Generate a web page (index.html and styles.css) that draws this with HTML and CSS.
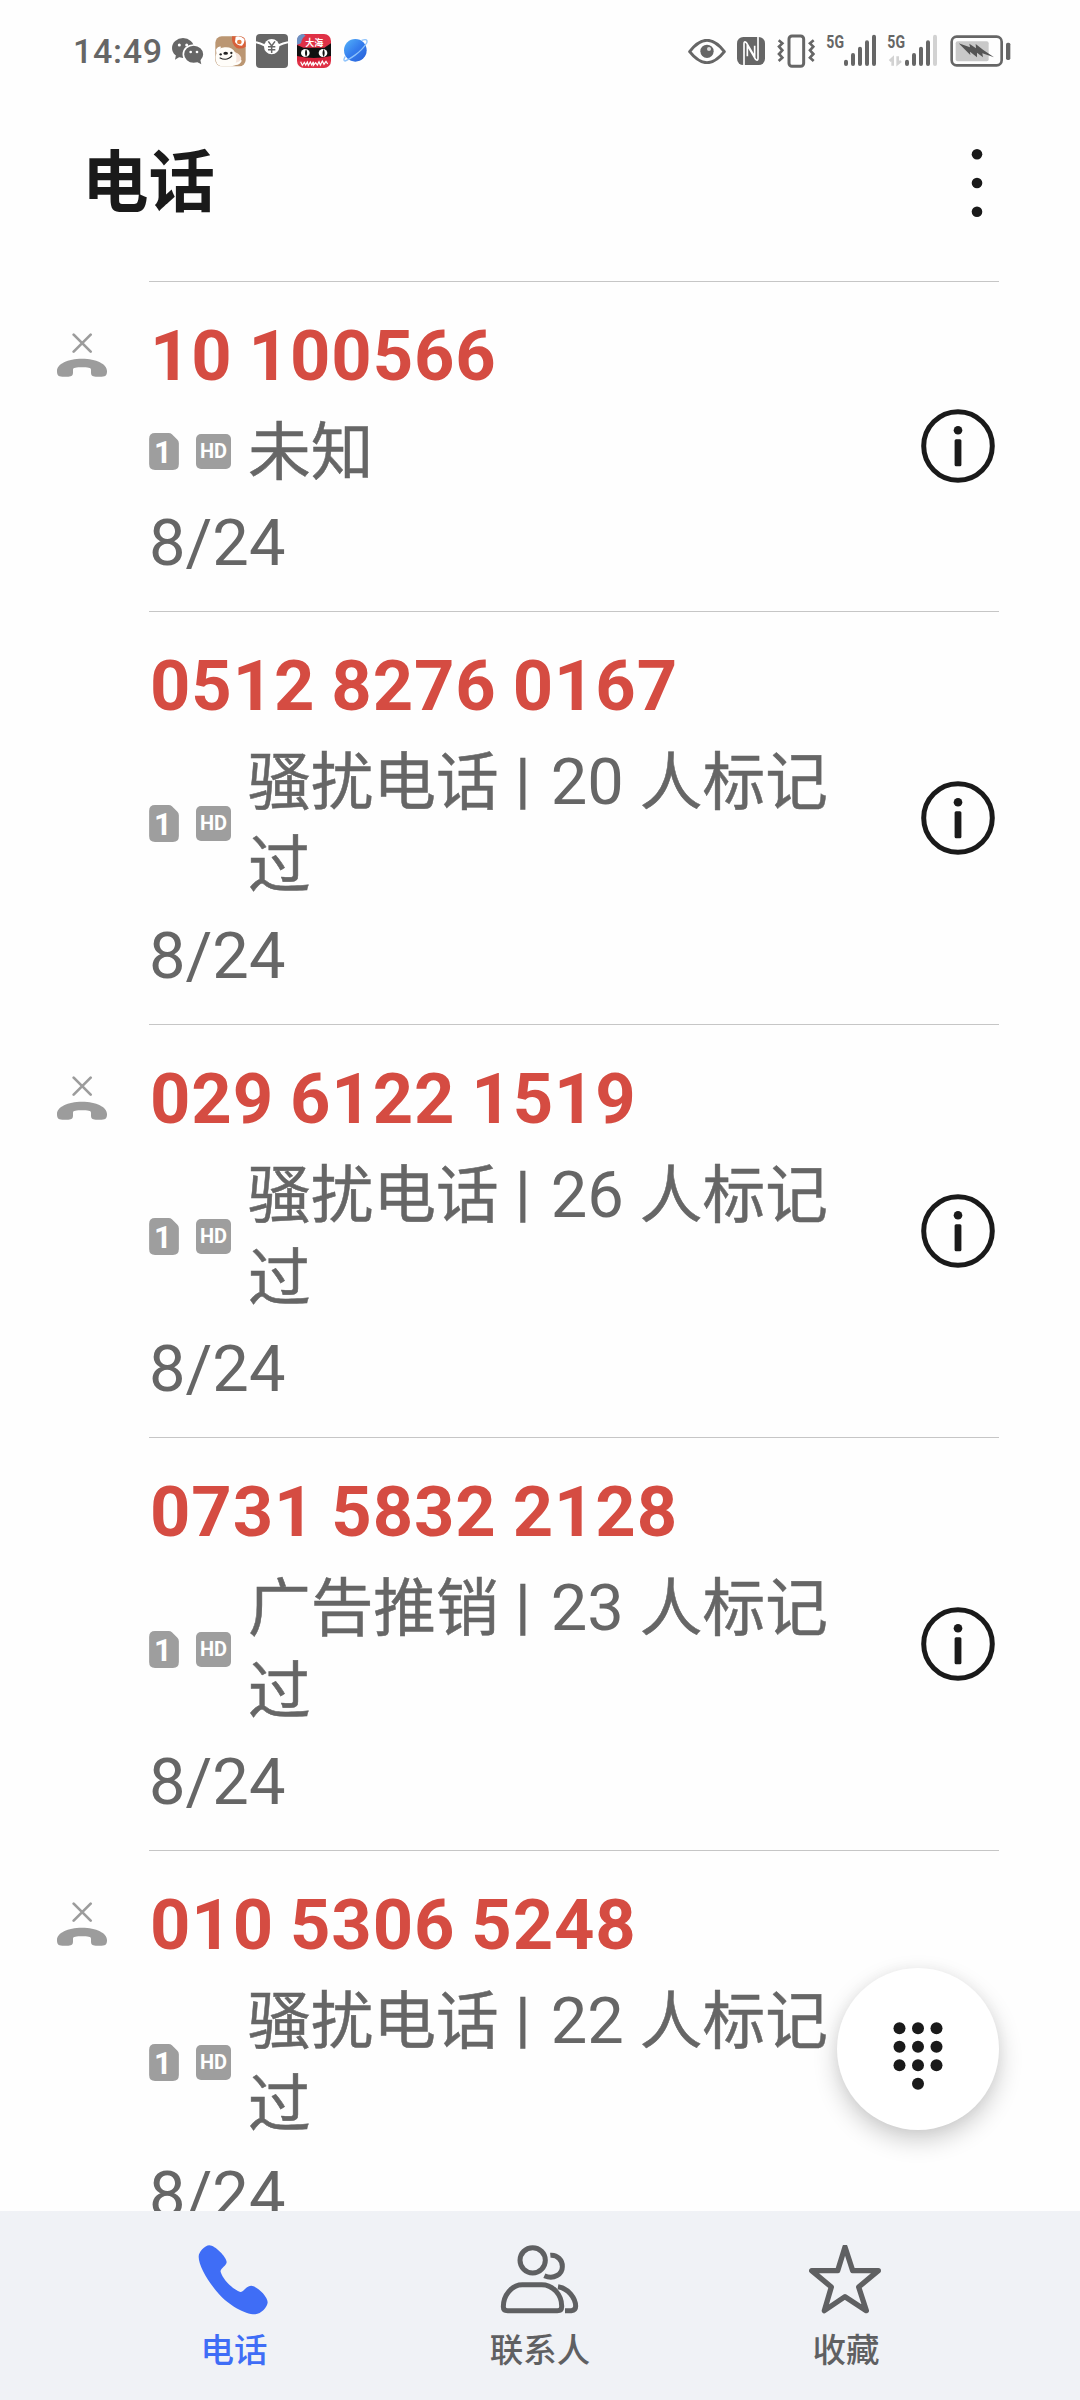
FILE: index.html
```html
<!DOCTYPE html>
<html lang="zh-CN">
<head>
<meta charset="utf-8">
<title>电话</title>
<link rel="stylesheet" href="styles.css">
</head>
<body>
<svg class="defs" aria-hidden="true">
  <symbol id="missed" viewBox="0 0 150 130">
    <path d="M50 4l51 51M101 4L50 55" fill="none" stroke="#9c9c9c" stroke-width="8" stroke-linecap="round"/>
    <path d="M0 113C0 92 32 76 75 76s75 16 75 37c0 12-3 17-16 17h-18c-11 0-14-4-14-13v-8c0-6-10-7-27-7s-27 1-27 7v8c0 9-3 13-14 13H16c-13 0-16-5-16-17z" fill="#9c9c9c"/>
  </symbol>
  <symbol id="info" viewBox="0 0 74 74">
    <circle cx="37" cy="37" r="34.3" fill="none" stroke="#1a1a1a" stroke-width="5"/>
    <circle cx="37" cy="21.3" r="4.3" fill="#1a1a1a"/>
    <rect x="33.6" y="30.3" width="6.8" height="27" rx="1.5" fill="#1a1a1a"/>
  </symbol>
  <symbol id="sim" viewBox="0 0 90 112">
    <path d="M18 0h41q6 0 10 4l16 16q5 5 5 11v63q0 18-18 18H18Q0 112 0 94V18Q0 0 18 0z" fill="#9e9e9e"/>
  </symbol>
</svg>

<div class="phone">
  <header class="status">
    <div class="status-left">
      <span class="clock">14:49</span>
      <svg class="wechat" width="32" height="28" viewBox="337 51 96 84">
        <ellipse cx="370" cy="84" rx="33" ry="30" fill="#666"/>
        <path d="M350 100l-4 19 17-10z" fill="#666"/>
        <ellipse cx="402" cy="103" rx="31" ry="28" fill="#666" stroke="#fff" stroke-width="5"/>
        <path d="M408 124l17 9-4-17z" fill="#666"/>
        <g fill="#fff"><circle cx="359" cy="75" r="4.5"/><circle cx="381" cy="75" r="4.5"/><circle cx="393" cy="96" r="4"/><circle cx="412" cy="96" r="4"/></g>
      </svg>
      <svg class="dog" width="31" height="31" viewBox="464 47 93 93">
        <rect x="465" y="48" width="91" height="90" rx="19" fill="#bb9672"/>
        <path d="M515 48h22q19 0 19 19v12q-12 9-27 4-16-10-14-35z" fill="#d8603a"/>
        <path d="M526 49q14-4 26 7 2 14-7 20-15 0-21-11z" fill="#fff"/>
        <circle cx="537" cy="65" r="7" fill="#e8793f"/>
        <path d="M466 108q2-26 27-27 22-2 31 15 15 8 20 26-6 12-17 12-8 4-26 4h-19q-16-4-16-24z" fill="#fffdf9"/>
        <path d="M467 87q7-11 15-8l-7 21q-8 3-8-13z" fill="#fff"/>
        <path d="M523 96q9 14 3 31 16-3 17-14-5-13-20-17z" fill="#f5e5dc"/>
        <g fill="#222"><circle cx="481" cy="102" r="3.5"/><ellipse cx="496" cy="99" rx="7" ry="4.5"/><circle cx="513" cy="98" r="3.5"/></g>
        <path d="M478 112q22 12 37-6" stroke="#222" stroke-width="3.5" fill="none"/>
      </svg>
      <svg class="pay" width="32" height="34" viewBox="588 42 96 102">
        <rect x="588" y="42" width="96" height="102" rx="12" fill="#666"/>
        <path d="M588 67q26 6 46 24 20-18 50-24" fill="none" stroke="#fff" stroke-width="6"/>
        <circle cx="635" cy="80" r="23" fill="#fff"/>
        <path d="M625 64l10 14 10-14M635 78v21M624 80h22M624 89h22" fill="none" stroke="#666" stroke-width="4.5"/>
      </svg>
      <svg class="cat" width="34" height="34" viewBox="711 42 102 102">
        <rect x="711" y="42" width="102" height="102" rx="21" fill="#df3146"/>
        <path d="M711 74V62q0-20 20-20l6 5q-12 7-14 23z" fill="#6c91c4"/>
        <path d="M711 75l19 8h63l20-13v44H711z" fill="#111"/>
        <text x="763" y="79" font-size="27" text-anchor="middle" class="cat-name">大海</text>
        <g fill="#fff"><ellipse cx="736" cy="99" rx="13" ry="12"/><ellipse cx="789" cy="99" rx="13" ry="12"/></g>
        <path d="M738 87q-6 12 0 24 7-12 0-24zM791 87q-7 12 0 24 6-12 0-24z" fill="#111"/>
        <path d="M711 108q51 12 102 0v13q-51 8-102 0z" fill="#d5213a"/>
        <path d="M722 125l5 11 6-9 4 8 5-9 3 10 6-10 4 9 5-10v11l7-8 5 7 5-10 4 10 6-12 5 10 6-9 5 8" stroke="#fff" stroke-width="3.5" fill="none"/>
      </svg>
      <svg class="planet" width="25" height="25" viewBox="850 55 75 75">
        <defs><linearGradient id="sky" x1="0" y1="0" x2="1" y2="1"><stop offset="0" stop-color="#55b4fa"/><stop offset=".5" stop-color="#347ced"/><stop offset="1" stop-color="#2860d6"/></linearGradient></defs>
        <circle cx="887" cy="92" r="34" fill="url(#sky)"/>
        <path d="M906 62q20-7 15 8-13 21-36 37-20 14-29 17-7-1 1-14" fill="none" stroke="#8fc3fb" stroke-width="4"/>
      </svg>
    </div>
    <div class="status-right">
      <svg width="38" height="25" viewBox="25 56 114 75">
        <path d="M30 94q52-68 104 0-52 66-104 0z" fill="none" stroke="#666" stroke-width="9" stroke-linejoin="round"/>
        <circle cx="82" cy="93" r="20" fill="#666"/><circle cx="88" cy="86" r="6" fill="#ddd"/>
      </svg>
      <svg class="nfc" width="28" height="28" viewBox="172 50 84 84">
        <rect x="172" y="50" width="84" height="84" rx="19" fill="#666"/>
        <path d="M193 134V70q0-9 7-3l25 42V76M235 50v64q0 9-7 3l-25-42v33" fill="none" stroke="#fff" stroke-width="5"/>
      </svg>
      <svg class="vibrate" width="38" height="34" viewBox="291 43 114 102">
        <rect x="327" y="49" width="44" height="91" rx="9" fill="none" stroke="#666" stroke-width="9"/>
        <path d="M296 62l11 9-10 10 10 11-10 11 10 11-11 10M401 62l-11 9 10 10-10 11 10 11-10 11 11 10" fill="none" stroke="#666" stroke-width="8"/>
      </svg>
      <svg class="signal" width="51" height="34" viewBox="438 40 153 102">
        <text x="439" y="83" class="net" textLength="53" lengthAdjust="spacingAndGlyphs">5G</text>
        <path d="M498 123v7M519 103v27M540 84v46M561 65v65M582 48v82" stroke="#666" stroke-width="12" stroke-linecap="round"/>
      </svg>
      <svg class="signal2" width="51" height="34" viewBox="621 40 153 102">
        <text x="622" y="83" class="net" textLength="53" lengthAdjust="spacingAndGlyphs">5G</text>
        <path d="M765 48v82" stroke="#d2d2d2" stroke-width="12" stroke-linecap="round"/>
        <path d="M681 123v7M702 103v27M723 84v46M744 65v65" stroke="#666" stroke-width="12" stroke-linecap="round"/>
        <path d="M638 135v-22l-9 8M653 107v22l10-8" fill="none" stroke="#d2d2d2" stroke-width="8"/>
      </svg>
      <svg class="battery" width="61" height="33" viewBox="809 43 183 99">
        <rect x="814" y="48" width="150" height="86" rx="15" fill="none" stroke="#666" stroke-width="8"/>
        <rect x="826" y="62" width="99" height="60" rx="6" fill="#c9c9c9"/>
        <path d="M835 68l34 12-2-11 20 14-1-13 22 17 33 23-35-12 2 12-18-14v14l-21-17 1 10z" fill="#555"/>
        <rect x="977" y="66" width="13" height="52" rx="5" fill="#666"/>
      </svg>
    </div>
  </header>

  <div class="titlebar">
    <h1>电话</h1>
    <svg class="more" width="12" height="70" viewBox="0 0 12 70"><g fill="#1a1a1a"><circle cx="6" cy="6.3" r="5.3"/><circle cx="6" cy="35" r="5.3"/><circle cx="6" cy="63.7" r="5.3"/></g></svg>
  </div>

  <main class="calls">
    <article class="call">
      <svg class="missed"><use href="#missed"/></svg>
      <div class="body">
        <div class="text">
          <div class="number">10 100566</div>
          <div class="detail"><span class="sim"><svg><use href="#sim"/></svg><b>1</b></span><span class="hd">HD</span><p>未知</p></div>
          <div class="date">8/24</div>
        </div>
        <svg class="info"><use href="#info"/></svg>
      </div>
    </article>
    <article class="call">
      <div class="missed"></div>
      <div class="body">
        <div class="text">
          <div class="number">0512 8276 0167</div>
          <div class="detail"><span class="sim"><svg><use href="#sim"/></svg><b>1</b></span><span class="hd">HD</span><p>骚扰电话<i class="bar">|</i><span class="count">20</span>人标记过</p></div>
          <div class="date">8/24</div>
        </div>
        <svg class="info"><use href="#info"/></svg>
      </div>
    </article>
    <article class="call">
      <svg class="missed"><use href="#missed"/></svg>
      <div class="body">
        <div class="text">
          <div class="number">029 6122 1519</div>
          <div class="detail"><span class="sim"><svg><use href="#sim"/></svg><b>1</b></span><span class="hd">HD</span><p>骚扰电话<i class="bar">|</i><span class="count">26</span>人标记过</p></div>
          <div class="date">8/24</div>
        </div>
        <svg class="info"><use href="#info"/></svg>
      </div>
    </article>
    <article class="call">
      <div class="missed"></div>
      <div class="body">
        <div class="text">
          <div class="number">0731 5832 2128</div>
          <div class="detail"><span class="sim"><svg><use href="#sim"/></svg><b>1</b></span><span class="hd">HD</span><p>广告推销<i class="bar">|</i><span class="count">23</span>人标记过</p></div>
          <div class="date">8/24</div>
        </div>
        <svg class="info"><use href="#info"/></svg>
      </div>
    </article>
    <article class="call">
      <svg class="missed"><use href="#missed"/></svg>
      <div class="body">
        <div class="text">
          <div class="number">010 5306 5248</div>
          <div class="detail"><span class="sim"><svg><use href="#sim"/></svg><b>1</b></span><span class="hd">HD</span><p>骚扰电话<i class="bar">|</i><span class="count">22</span>人标记过</p></div>
          <div class="date">8/24</div>
        </div>
      </div>
    </article>
  </main>

  <button class="fab" aria-label="拨号">
    <svg width="50" height="68" viewBox="0 0 50 68"><g fill="#1a1a1a">
      <circle cx="6.5" cy="6.3" r="6"/><circle cx="25" cy="6.3" r="6"/><circle cx="43.5" cy="6.3" r="6"/>
      <circle cx="6.5" cy="24.8" r="6"/><circle cx="25" cy="24.8" r="6"/><circle cx="43.5" cy="24.8" r="6"/>
      <circle cx="6.5" cy="43.3" r="6"/><circle cx="25" cy="43.3" r="6"/><circle cx="43.5" cy="43.3" r="6"/>
      <circle cx="25" cy="61.8" r="6"/></g></svg>
  </button>

  <nav class="tabs">
    <a class="tab active">
      <svg width="70" height="70" viewBox="115 134 210 210"><path d="M149 135c17 0 51 35 52 50 0 11-21 20-18 30 7 23 35 51 59 60 10 1 17-19 33-19 16 1 49 31 49 50 0 14-20 35-37 36-29 1-82-29-110-62-33-37-60-84-60-111 0-13 18-34 32-34z" fill="#3f6df6"/></svg>
      <span>电话</span>
    </a>
    <a class="tab">
      <svg width="79" height="70" viewBox="1020 134 237 210"><g fill="none" stroke="#5f6062" stroke-width="15">
        <circle cx="1118" cy="180" r="38"/>
        <path d="M1171 165c21-2 37 15 36 34 0 22-25 40-54 27"/>
        <path d="M1043 331q-13 0-13-12c0-35 26-66 57-66h58c33 0 61 30 60 66q0 12-13 12z"/>
        <path d="M1194 259c31 5 53 35 53 59q0 12-13 13h-19"/></g></svg>
      <span>联系人</span>
    </a>
    <a class="tab">
      <svg width="72" height="70" viewBox="88 134 216 210"><path d="M196 140l23 71h77l-59 49 23 71-64-42-62 42 21-71-59-49h78z" fill="none" stroke="#5f6062" stroke-width="16" stroke-linejoin="round"/></svg>
      <span>收藏</span>
    </a>
  </nav>
</div>
</body>
</html>
```
FILE: styles.css
```css
* { box-sizing: border-box; margin: 0; padding: 0; }
body { background: #fefefe; font-family: Roboto, "Noto Sans CJK SC", sans-serif; color: #666; }
svg { display: block; flex: none; }
.defs { width: 0; height: 0; position: absolute; }
.phone { position: relative; width: 1080px; height: 2400px; overflow: hidden; display: flex; flex-direction: column; }

.status { height: 102px; flex: none; padding: 0 69px 0 73px; display: flex; justify-content: space-between; align-items: center; }
.status-left, .status-right { display: flex; align-items: center; }
.clock { font-size: 34px; font-weight: 500; letter-spacing: .7px; line-height: 40px; width: 99px; white-space: nowrap; margin-top: -1px; }
.dog { margin-left: 11px; }
.pay { margin-left: 10px; }
.cat { margin-left: 9px; }
.planet { margin-left: 12px; margin-top: -1px; }
.cat-name { font-family: "Noto Sans CJK SC", sans-serif; font-weight: 700; fill: #fff; }
.net { font-size: 54px; font-weight: 700; fill: #666; }
.signal, .signal2 { overflow: visible; }
.nfc { margin-left: 11px; }
.vibrate { margin-left: 12px; }
.signal { margin-left: 11px; }
.signal2 { margin-left: 10px; }
.battery { margin-left: 12px; }

.titlebar { height: 179px; flex: none; padding: 0 97px 19px 82px; display: flex; justify-content: space-between; align-items: center; }
.titlebar h1 { font-size: 66.5px; font-weight: 700; line-height: 90px; margin-top: -10px; color: #1a1a1a; font-family: "Noto Sans CJK SC", sans-serif; }
.more { margin-top: 2px; }

.calls { flex: 1; min-height: 0; overflow: hidden; }
.call { display: flex; padding-left: 57px; }
.missed { width: 50px; height: 44px; margin: 52px 42px 0 0; flex: none; }
.body { width: 850px; display: flex; align-items: center; justify-content: space-between; border-top: 1px solid #c6c6c6; }
.text { width: 690px; padding: 32px 0 30px; }
.number { font-size: 70.5px; font-weight: 700; line-height: 84px; letter-spacing: .9px; word-spacing: -2.5px; padding-left: 1px; color: #d54c42; white-space: nowrap; }
.detail { display: flex; align-items: center; height: 83px; margin: 12px 0; }
.call:nth-child(n+2) .detail { height: 166px; }
.detail p { font-size: 62.7px; line-height: 83px; width: 590px; margin-left: 17px; padding-top: 1px; margin-bottom: -1px; -webkit-text-stroke: .5px #666; }
.bar { display: inline-block; font-style: normal; font-size: 62px; width: 48px; text-align: center; line-height: 60px; vertical-align: 2px; }
.count { font-size: 65px; line-height: 60px; margin: 0 16px 0 4px; -webkit-text-stroke: 0; }
.sim { position: relative; width: 30px; height: 37px; flex: none; display: grid; place-items: center; }
.sim svg { position: absolute; inset: 0; width: 30px; height: 37px; }
.sim b { position: relative; color: #fff; font-size: 31px; line-height: 37px; font-weight: 700; top: 1px; left: -1px; }
.hd { width: 35px; height: 35px; margin-left: 17px; flex: none; border-radius: 5px; background: #9e9e9e; color: #fff; font-size: 20px; font-weight: 700; line-height: 35px; text-align: center; }
.date { font-size: 65px; line-height: 76px; }
.info { width: 74px; height: 74px; margin: 0 4px 1px 0; }
.call .date { margin-bottom: 0; }

.fab { position: absolute; left: 837px; top: 1968px; width: 162px; height: 162px; border: 0; border-radius: 50%; background: #fff; box-shadow: 0 10px 24px rgba(0,0,0,.2), 0 0 14px rgba(0,0,0,.04); display: grid; place-items: center; }
.fab svg { margin-top: 13px; }

.tabs { height: 189px; flex: none; background: #f0f2f6; display: flex; padding: 0 81px; }
.tab { width: 306px; padding-top: 34px; display: flex; flex-direction: column; align-items: center; }
.tab svg { margin-left: -2px; }
.tab span { font-size: 33.5px; font-weight: 500; line-height: 46px; margin-top: 13px; color: #5f6062; }
.tab.active span { color: #3f6df6; }
```
